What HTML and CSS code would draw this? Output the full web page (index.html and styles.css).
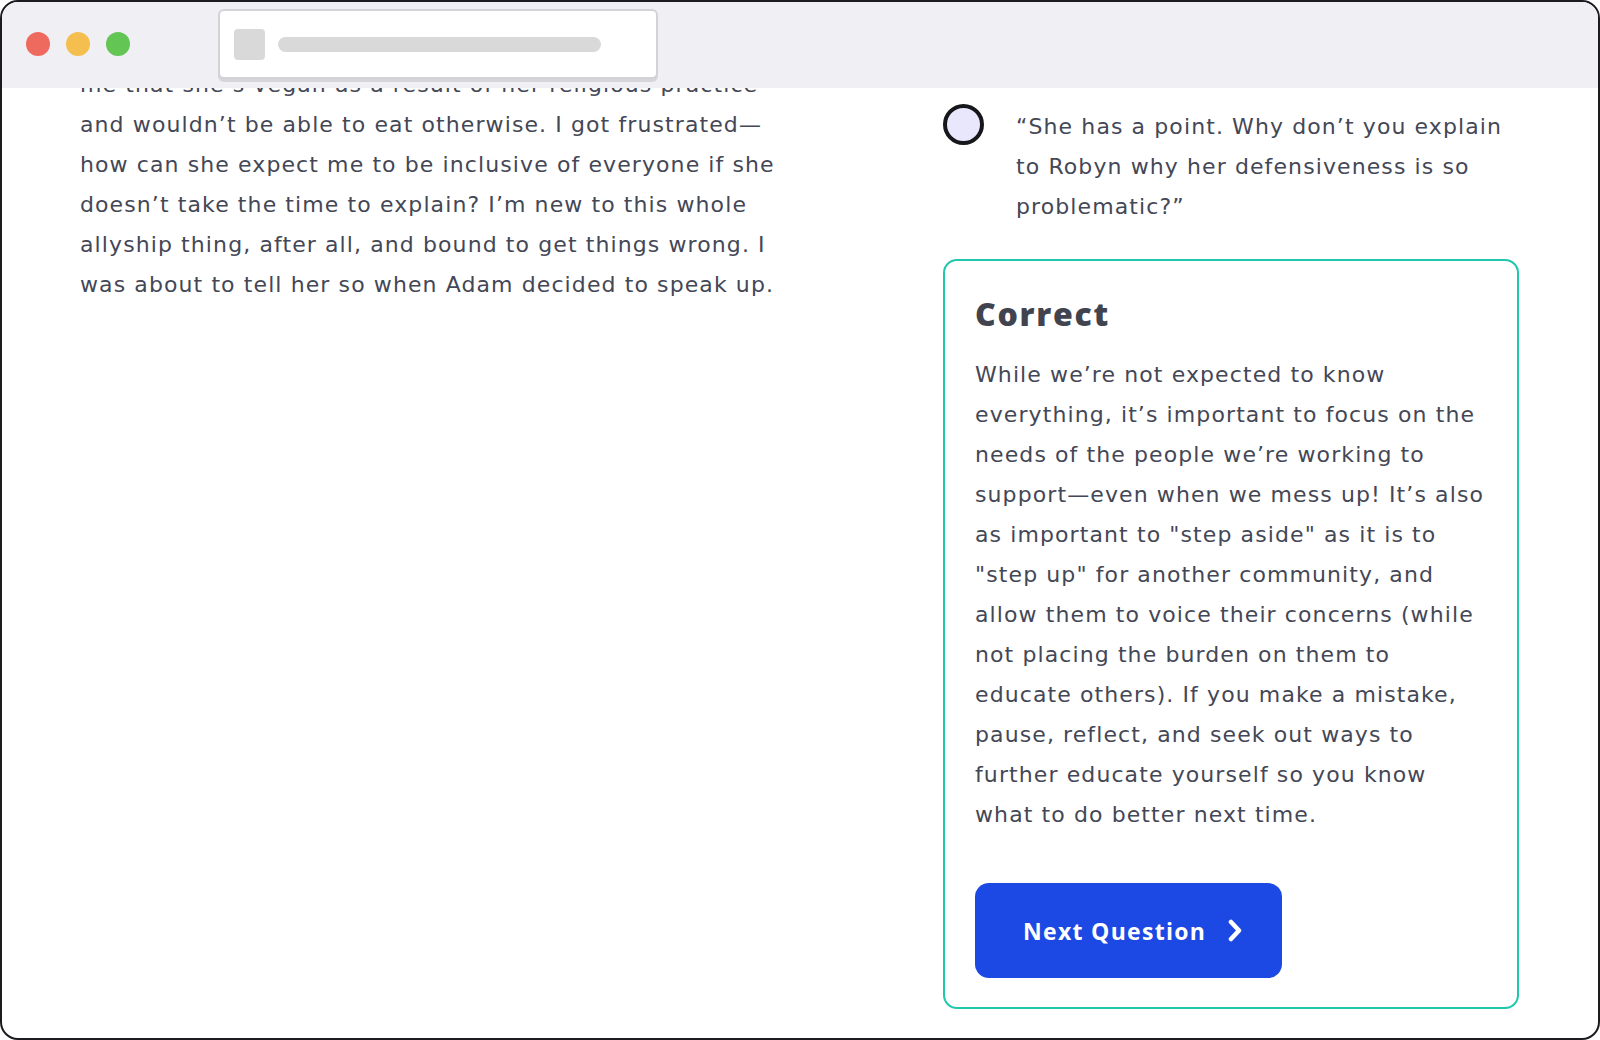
FILE: index.html
```html
<!DOCTYPE html>
<html lang="en">
<head>
<meta charset="utf-8">
<title>Allyship scenario</title>
<link rel="stylesheet" href="styles.css">
</head>
<body>
<div class="window">
  <header class="titlebar">
    <div class="dots">
      <span class="dot dot-red"></span>
      <span class="dot dot-yellow"></span>
      <span class="dot dot-green"></span>
    </div>
    <div class="address">
      <span class="address-icon"></span>
      <span class="address-line"></span>
    </div>
  </header>
  <main class="content">
    <section class="story">
      <p>me that she’s vegan as a result of her religious practice<br>
      and wouldn’t be able to eat otherwise. I got frustrated—<br>
      how can she expect me to be inclusive of everyone if she<br>
      doesn’t take the time to explain? I’m new to this whole<br>
      allyship thing, after all, and bound to get things wrong. I<br>
      was about to tell her so when Adam decided to speak up.</p>
    </section>
    <section class="quiz">
      <div class="option">
        <span class="radio"></span>
        <p class="option-text">“She has a point. Why don’t you explain<br>
        to Robyn why her defensiveness is so<br>
        problematic?”</p>
      </div>
      <div class="feedback">
        <h2 class="feedback-title">Correct</h2>
        <p class="feedback-text">While we’re not expected to know<br>
        everything, it’s important to focus on the<br>
        needs of the people we’re working to<br>
        support—even when we mess up! It’s also<br>
        as important to "step aside" as it is to<br>
        "step up" for another community, and<br>
        allow them to voice their concerns (while<br>
        not placing the burden on them to<br>
        educate others). If you make a mistake,<br>
        pause, reflect, and seek out ways to<br>
        further educate yourself so you know<br>
        what to do better next time.</p>
        <button class="next-btn" type="button">
          <span>Next Question</span>
          <svg class="chev" width="14" height="23" viewBox="0 0 14 23" aria-hidden="true"><path d="M3 3 L11 11.5 L3 20" fill="none" stroke="#fff" stroke-width="4.5" stroke-linecap="round" stroke-linejoin="round"/></svg>
        </button>
      </div>
    </section>
  </main>
</div>
</body>
</html>
```
FILE: styles.css
```css
* { box-sizing: border-box; }
html, body { margin: 0; padding: 0; background: #ffffff; }
body { width: 1600px; height: 1040px; font-family: "Open Sans", "Noto Sans", sans-serif; color: #444755; }

.window {
  width: 1600px;
  height: 1040px;
  border: 2px solid #1b1b20;
  border-radius: 18px;
  overflow: hidden;
  display: flex;
  flex-direction: column;
  background: #fff;
}

.titlebar {
  height: 86px;
  flex: 0 0 86px;
  background: #efeff4;
  display: flex;
  align-items: flex-start;
  padding: 7px 0 0 24px;
  position: relative;
  z-index: 2;
}
.dots { display: flex; gap: 16px; margin-top: 23px; }
.dot { width: 24px; height: 24px; border-radius: 50%; display: block; }
.dot-red { background: #ef6a5e; }
.dot-yellow { background: #f5bf4f; }
.dot-green { background: #62c554; }

.address {
  margin-left: 88px;
  width: 440px;
  height: 70px;
  background: #fff;
  border: 2px solid #d3d3d7;
  border-radius: 6px;
  box-shadow: 0 3px 0 #d6d6da;
  display: flex;
  align-items: center;
  padding-left: 14px;
}
.address-icon { width: 31px; height: 31px; border-radius: 4px; background: #d9d9d9; display: block; }
.address-line { margin-left: 13px; width: 323px; height: 15px; border-radius: 8px; background: #d9d9d9; display: block; }

.content {
  flex: 1;
  overflow: hidden;
  display: flex;
  justify-content: space-between;
  padding: 0 79px 0 78px;
}

.story p, .option-text, .feedback-text {
  font-family: "DejaVu Sans", "Open Sans", sans-serif;
  font-size: 22px;
  line-height: 40px;
  letter-spacing: 1.1px;
  white-space: nowrap;
}

.story { width: 740px; margin-top: -23px; }
.story p { margin: 0; }

.quiz { width: 576px; padding-top: 17px; }
.option { display: flex; align-items: flex-start; }
.radio {
  flex: 0 0 41px;
  width: 41px;
  height: 41px;
  border-radius: 50%;
  border: 4px solid #16161b;
  background: #e8e7fb;
  margin-top: -1px;
}
.option-text { margin: 0 0 0 32px; padding-top: 2px; }

.feedback {
  margin-top: 32px;
  border: 2px solid #1fc7ae;
  border-radius: 14px;
  padding: 33px 28px 29px 30px;
}
.feedback-title {
  margin: 0;
  font-size: 32px;
  line-height: 40px;
  font-weight: 800;
  letter-spacing: 1.7px;
  color: #41444f;
}
.feedback-text { margin: 21px 0 0 0; }

.next-btn {
  margin-top: 48px;
  height: 95px;
  width: 307px;
  border: none;
  border-radius: 14px;
  background: #1c48e4;
  color: #fff;
  font-family: inherit;
  font-size: 23px;
  font-weight: 700;
  letter-spacing: 1.3px;
  display: flex;
  align-items: center;
  padding: 0 0 0 48px;
  gap: 22px;
  cursor: pointer;
}
.chev { display: block; }
```
